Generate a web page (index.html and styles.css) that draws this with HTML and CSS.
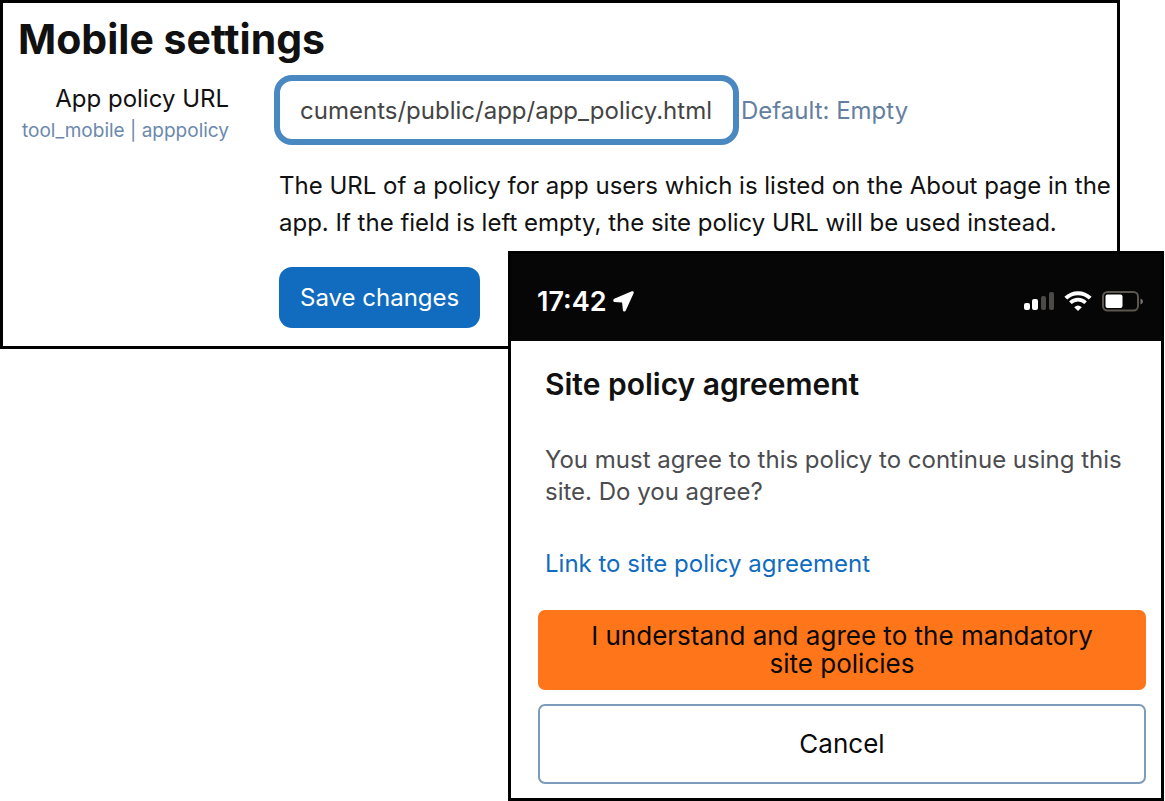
FILE: index.html
```html
<!DOCTYPE html>
<html lang="en">
<head>
<meta charset="utf-8">
<title>Mobile settings</title>
<link rel="stylesheet" href="styles.css">
</head>
<body>
<main class="settings">
  <h1 class="settings-title">Mobile settings</h1>
  <form class="settings-form">
    <div class="setting-name">
      <label class="setting-label" for="policy-url">App policy URL</label>
      <span class="setting-key">tool_mobile | apppolicy</span>
    </div>
    <div class="setting-body">
      <div class="setting-field">
        <input class="url-input" id="policy-url" type="text" dir="rtl" value="documents/public/app/app_policy.html">
        <span class="setting-default">Default: Empty</span>
      </div>
      <p class="setting-help">The URL of a policy for app users which is listed on the About page in the app. If the field is left empty, the site policy URL will be used instead.</p>
      <button class="save-button" type="button">Save changes</button>
    </div>
  </form>
</main>
<section class="phone">
  <header class="status-bar">
    <div class="status-group">
      <span class="clock">17:42</span>
      <svg class="arrow-icon" width="21" height="21" viewBox="0 0 21 21" aria-hidden="true"><path d="M18.800.3 1.200 7.800C-.2 8.600 0 10.800 1.600 11L9.100 11.600 9.900 19.200C10.200 20.900 12.100 21.100 12.800 19.600L20.600 2.200C21.100.8 20.200-.2 18.800.3Z" fill="#fff"/></svg>
    </div>
    <div class="status-icons">
      <svg width="31" height="19" viewBox="0 0 31 19" aria-hidden="true">
        <rect x="0" y="11" width="6" height="7" rx="2" fill="#fff"/>
        <rect x="8" y="7" width="6" height="11" rx="2" fill="#fff"/>
        <rect x="17" y="4" width="5" height="14" rx="2" fill="#4c4a49"/>
        <rect x="25" y="0" width="5" height="18" rx="2" fill="#4c4a49"/>
      </svg>
      <svg width="28" height="21" viewBox="0 0 28 21" fill="none" stroke="#fff" aria-hidden="true">
        <path d="M1.800 7.200A17.300 17.300 0 0 1 26.200 7.200" stroke-width="4"/>
        <path d="M6.400 11.800A10.800 10.800 0 0 1 21.600 11.800" stroke-width="3.600"/>
        <path d="M10.200 16.200Q14 13 17.800 16.200L14 20Z" fill="#fff" stroke="none"/>
      </svg>
      <svg width="42" height="21" viewBox="0 0 42 21" aria-hidden="true">
        <rect x="2" y="1" width="35" height="18.500" rx="4.500" fill="none" stroke="#5c5651" stroke-width="2"/>
        <rect x="4.500" y="3.500" width="17" height="13.500" rx="2" fill="#fff"/>
        <path d="M39.500 7.500Q42 8.500 42 10.500T39.500 13.500Z" fill="#77777c"/>
      </svg>
    </div>
  </header>
  <div class="agreement">
    <h2 class="agreement-title">Site policy agreement</h2>
    <p class="agreement-text">You must agree to this policy to continue using this site. Do you agree?</p>
    <a class="agreement-link" href="#policy">Link to site policy agreement</a>
    <div class="agreement-actions">
      <button class="action action-primary" type="button">I understand and agree to the mandatory site policies</button>
      <button class="action action-cancel" type="button">Cancel</button>
    </div>
  </div>
</section>
</body>
</html>
```
FILE: styles.css
```css
* { box-sizing: border-box; }

body {
  margin: 0;
  background: #fff;
  color: #111;
  font-family: Inter, "Liberation Sans", sans-serif;
  font-size: 24px;
}

h1, h2, p { margin: 0; }

button, input { font: inherit; }

.settings {
  margin-right: 45px;
  padding: 12px 0 18px 15px;
  border: 3px solid #000;
}

.settings-title {
  font-size: 41px;
  line-height: 48px;
  font-weight: 700;
}

.settings-form {
  display: grid;
  grid-template-columns: 211px 1fr;
  column-gap: 45px;
  padding-top: 12px;
}

.setting-name {
  display: flex;
  flex-direction: column;
  text-align: right;
  padding-top: 8px;
}

.setting-label { line-height: 32px; }

.setting-key {
  color: #6b89ad;
  font-size: 19px;
  line-height: 32px;
}

.setting-field {
  display: flex;
  align-items: center;
  gap: 2px;
}

.url-input {
  width: 465px;
  height: 70px;
  padding: 0 21px;
  border: 6px solid #4a88c2;
  border-radius: 18px;
  background: #fff;
  color: #444;
  outline: none;
}

.setting-default { color: #64809f; }

.setting-help {
  padding: 22px 0 26px 5px;
  line-height: 37px;
}

.save-button {
  margin-left: 5px;
  padding: 0 21px;
  height: 61px;
  border: 0;
  border-radius: 13px;
  background: #116cbf;
  color: #fff;
}

.phone {
  position: relative;
  margin: -98px 1px 0 508px;
  border: 3px solid #000;
  background: #fff;
}

.status-bar {
  display: flex;
  align-items: center;
  justify-content: space-between;
  height: 87px;
  padding: 8px 18px 0 26px;
  background: #060606;
  color: #fff;
}

.status-group, .status-icons {
  display: flex;
  align-items: center;
}

.status-group { gap: 7px; }

.status-icons { gap: 9px; }

.clock {
  font-size: 27px;
  font-weight: 600;
}

.agreement { padding: 24px 15px 14px 27px; }

.agreement-title {
  padding-left: 7px;
  font-size: 30px;
  line-height: 38px;
  font-weight: 600;
}

.agreement-text {
  padding: 41px 0 40px 7px;
  color: #4c4c50;
  line-height: 32px;
}

.agreement-link {
  display: block;
  padding-left: 7px;
  color: #116cbf;
  line-height: 32px;
  text-decoration: none;
}

.agreement-actions {
  display: flex;
  flex-direction: column;
  gap: 14px;
  padding-top: 30px;
}

.action {
  height: 80px;
  padding: 0 40px;
  border: 0;
  border-radius: 7px;
  color: #0a0a0a;
  font-size: 26px;
  line-height: 28px;
}

.action-primary { background: #ff751a; }

.action-cancel {
  border: 2px solid #7d9cbb;
  background: #fff;
}
```
